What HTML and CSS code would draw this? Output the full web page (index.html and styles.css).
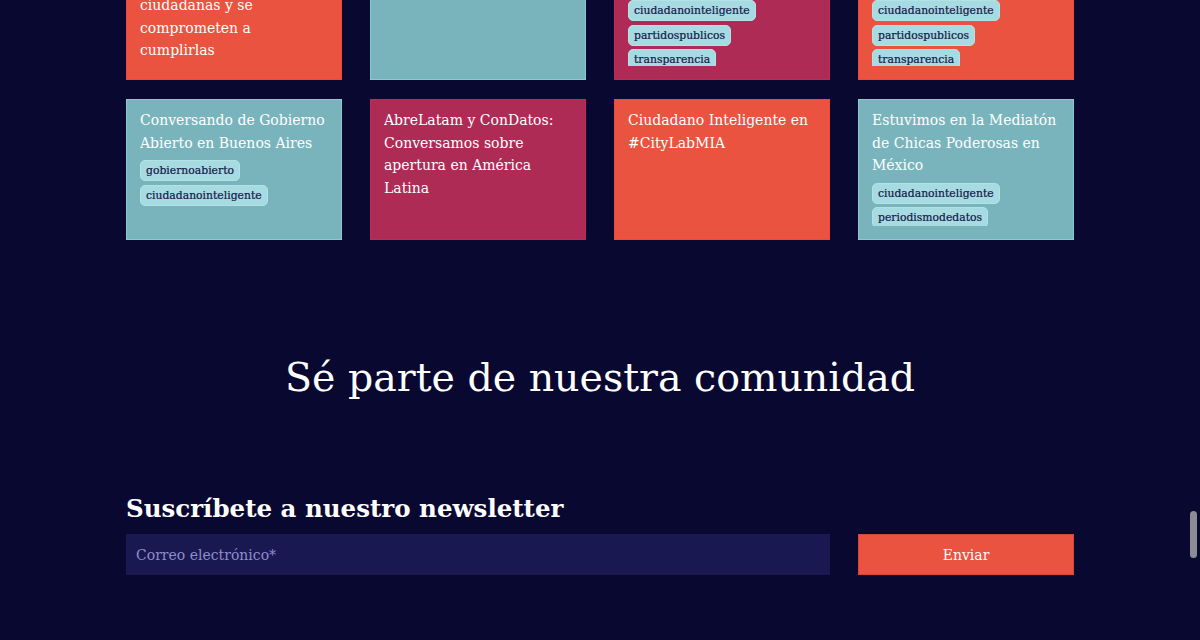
FILE: index.html
```html
<!DOCTYPE html>
<html lang="es">
<head>
<meta charset="utf-8">
<title>Ciudadano Inteligente</title>
<link rel="stylesheet" href="styles.css">
</head>
<body>
<section class="posts">
  <div class="grid">
    <article class="card coral">
      <div class="card-in">
        <h4 class="card-title">Candidatos y candidatas<br>conocen las propuestas<br>ciudadanas y se<br>comprometen a<br>cumplirlas</h4>
      </div>
    </article>
    <article class="card teal">
      <div class="card-in">
        <h4 class="card-title">Lanzamos la nueva Vota Inteligente</h4>
      </div>
    </article>
    <article class="card magenta">
      <div class="card-in">
        <h4 class="card-title">Lanzamos Partidos Públicos en Chile</h4>
        <ul class="tags">
          <li class="tag">ciudadanointeligente</li>
          <li class="tag">partidospublicos</li>
          <li class="tag">transparencia</li>
        </ul>
      </div>
    </article>
    <article class="card coral">
      <div class="card-in">
        <h4 class="card-title">¿Qué tan públicos son los partidos?</h4>
        <ul class="tags">
          <li class="tag">ciudadanointeligente</li>
          <li class="tag">partidospublicos</li>
          <li class="tag">transparencia</li>
        </ul>
      </div>
    </article>

    <article class="card teal">
      <div class="card-in">
        <h4 class="card-title">Conversando de Gobierno Abierto en Buenos Aires</h4>
        <ul class="tags">
          <li class="tag">gobiernoabierto</li>
          <li class="tag">ciudadanointeligente</li>
        </ul>
      </div>
    </article>
    <article class="card magenta">
      <div class="card-in">
        <h4 class="card-title">AbreLatam y ConDatos: Conversamos sobre apertura en América Latina</h4>
      </div>
    </article>
    <article class="card coral">
      <div class="card-in">
        <h4 class="card-title">Ciudadano Inteligente en #CityLabMIA</h4>
      </div>
    </article>
    <article class="card teal">
      <div class="card-in">
        <h4 class="card-title">Estuvimos en la Mediatón de Chicas Poderosas en México</h4>
        <ul class="tags">
          <li class="tag">ciudadanointeligente</li>
          <li class="tag">periodismodedatos</li>
        </ul>
      </div>
    </article>
  </div>
</section>

<section class="community">
  <h2 class="community-title">Sé parte de nuestra comunidad</h2>
</section>

<section class="newsletter">
  <h3 class="newsletter-title">Suscríbete a nuestro newsletter</h3>
  <form class="nl-form">
    <input class="nl-input" type="email" placeholder="Correo electrónico*">
    <button class="nl-button" type="button">Enviar</button>
  </form>
</section>

<div class="scrollbar"></div>
</body>
</html>
```

FILE: styles.css
```css
* { box-sizing: border-box; }

html, body {
  margin: 0;
  padding: 0;
  height: 640px;
  overflow: hidden;
}

body {
  background: #090830;
  color: #ffffff;
  font-family: "DejaVu Serif", serif;
}

.grid {
  width: 948px;
  margin: -61px auto 0;
  display: grid;
  grid-template-columns: repeat(4, 216px);
  grid-auto-rows: 141px;
  column-gap: 28px;
  row-gap: 19px;
}

.card {
  border: 1px solid;
  padding: 9px 13px 13px;
}

.card-in {
  height: 100%;
  overflow: hidden;
}

.coral { background: #e9533f; border-color: #f0493a; }
.teal { background: #79b4bd; border-color: #8ccad2; }
.magenta { background: #ae2b56; border-color: #c12a58; }

.card-title {
  margin: 0 0 6px;
  font-size: 14px;
  font-weight: normal;
  line-height: 22.5px;
  color: #ffffff;
}

.tags {
  list-style: none;
  margin: 0;
  padding: 0;
  display: flex;
  flex-direction: column;
  align-items: flex-start;
  gap: 3.5px;
}

.tag {
  background: #a6dbe1;
  border: 1px solid #b2e2e8;
  color: #16164a;
  font-family: "DejaVu Serif", serif;
  font-size: 10.8px;
  line-height: 19px;
  height: 21px;
  padding: 0 5px;
  border-radius: 5px;
  -webkit-text-stroke: 0.2px #16164a;
}

.community {
  padding-top: 112px;
  text-align: center;
}

.community-title {
  margin: 0;
  font-size: 39.5px;
  font-weight: normal;
  line-height: 50px;
  -webkit-text-stroke: 1.1px #090830;
  paint-order: stroke fill;
}

.newsletter {
  width: 948px;
  margin: 0 auto;
  padding-top: 90px;
}

.newsletter-title {
  margin: 0 0 8px;
  font-size: 24.5px;
  font-weight: bold;
  line-height: 34px;
}

.nl-form {
  display: grid;
  grid-template-columns: 1fr 216px;
  column-gap: 28px;
  height: 41px;
}

.nl-input {
  background: #1a1850;
  border: none;
  outline: none;
  padding: 0 10px;
  font-family: "DejaVu Serif", serif;
  font-size: 14px;
  color: #ffffff;
}

.nl-input::placeholder {
  color: #8f8dcc;
}

.nl-button {
  background: #e9533f;
  border: 1px solid #d84530;
  color: #ffffff;
  font-family: "DejaVu Serif", serif;
  font-size: 14px;
  cursor: pointer;
}

.scrollbar {
  position: fixed;
  right: 3px;
  top: 511px;
  width: 7px;
  height: 47px;
  border-radius: 4px;
  background: #8c8c96;
}
```
